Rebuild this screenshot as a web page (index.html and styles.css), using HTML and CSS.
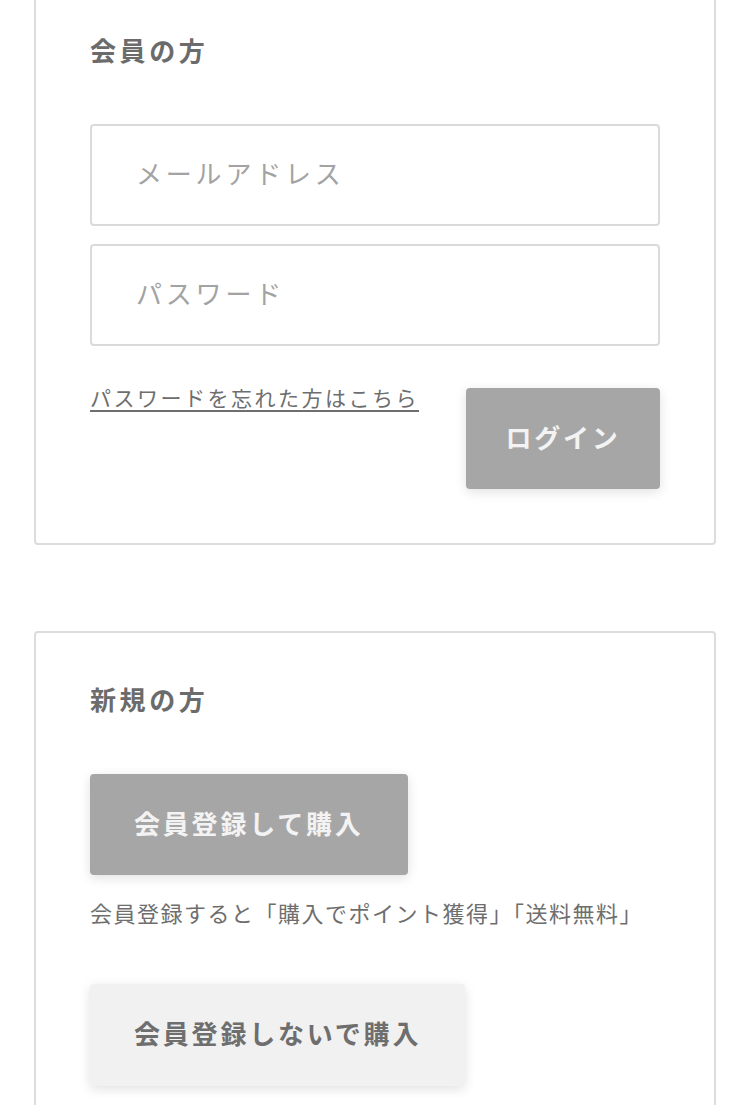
FILE: index.html
```html
<!DOCTYPE html>
<html lang="ja">
<head>
<meta charset="utf-8">
<title>ログイン</title>
<link rel="stylesheet" href="styles.css">
</head>
<body>
<main class="page">
  <section class="card card-member">
    <h2 class="card-title">会員の方</h2>
    <form class="login-form">
      <input class="field" type="email" placeholder="メールアドレス">
      <input class="field" type="password" placeholder="パスワード">
      <div class="login-row">
        <a class="forgot-link" href="#">パスワードを忘れた方はこちら</a>
        <button type="button" class="btn btn-dark btn-login">ログイン</button>
      </div>
    </form>
  </section>

  <section class="card card-new">
    <h2 class="card-title">新規の方</h2>
    <button type="button" class="btn btn-dark btn-register">会員登録して購入</button>
    <p class="benefit">会員登録すると「購入でポイント獲得」「送料無料」</p>
    <button type="button" class="btn btn-light btn-guest">会員登録しないで購入</button>
  </section>
</main>
</body>
</html>
```

FILE: styles.css
```css
html, body {
  margin: 0;
  padding: 0;
  background: #ffffff;
}

body {
  font-family: "Noto Sans CJK JP", "Noto Sans", sans-serif;
  color: #6e6e6e;
  overflow: hidden;
}

.page {
  display: flex;
  flex-direction: column;
  padding: 0 34px;
  margin-top: -18px;
}

.card {
  border: 2px solid #dcdcdc;
  border-radius: 4px;
  padding: 48px 54px 54px;
  display: flex;
  flex-direction: column;
  align-items: flex-start;
}

.card-new {
  margin-top: 86px;
}

.card-title {
  margin: 0;
  font-size: 26px;
  line-height: 36px;
  font-weight: 700;
  letter-spacing: 3.6px;
  color: #6b6b6b;
}

.login-form {
  align-self: stretch;
  margin-top: 56px;
  display: flex;
  flex-direction: column;
  gap: 18px;
}

.field {
  box-sizing: border-box;
  height: 102px;
  width: 100%;
  border: 2px solid #dadada;
  border-radius: 4px;
  padding: 0 0 5px 44px;
  font-family: inherit;
  font-size: 26px;
  letter-spacing: 3.8px;
  color: #6e6e6e;
  background: #fff;
  outline: none;
}

.field::placeholder {
  color: #a3a3a3;
}

.login-row {
  margin-top: 22px;
  display: flex;
  justify-content: space-between;
  align-items: flex-start;
}

.forgot-link {
  margin-top: 0;
  font-size: 21px;
  line-height: 22px;
  letter-spacing: 2.5px;
  color: #6e6e6e;
  text-decoration: underline;
  text-decoration-thickness: 2px;
  text-underline-offset: 4px;
}

.btn {
  box-sizing: border-box;
  border: none;
  border-radius: 4px;
  font-family: inherit;
  font-size: 26px;
  font-weight: 700;
  letter-spacing: 2.8px;
  height: 101px;
  padding: 0 44px 5px;
  cursor: pointer;
  box-shadow: 0 3px 12px rgba(0, 0, 0, 0.12);
}

.btn-dark {
  background: #a6a6a6;
  color: #f3f3f3;
}

.btn-light {
  background: #f1f1f1;
  color: #6e6e6e;
  height: 102px;
}

.btn-login {
  width: 194px;
  margin-top: 2px;
  padding: 0 0 5px;
}

.btn-register {
  margin-top: 57px;
}

.benefit {
  margin: 22px 0 0;
  font-size: 22px;
  line-height: 30px;
  letter-spacing: 1.5px;
  color: #6e6e6e;
}

.btn-guest {
  margin-top: 57px;
}
```
